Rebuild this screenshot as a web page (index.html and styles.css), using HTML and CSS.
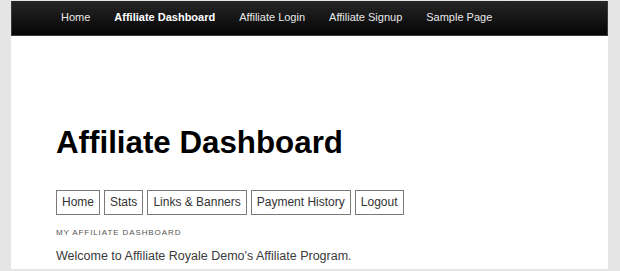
FILE: index.html
```html
<!DOCTYPE html>
<html lang="en">
<head>
  <meta charset="UTF-8">
  <meta name="viewport" content="width=device-width, initial-scale=1.0">
  <title>Affiliate Dashboard</title>
  <link rel="stylesheet" href="styles.css">
</head>
<body>

  <div class="page">
    <div class="navbar">
      <a href="#">Home</a>
      <a href="#" class="current">Affiliate Dashboard</a>
      <a href="#">Affiliate Login</a>
      <a href="#">Affiliate Signup</a>
      <a href="#">Sample Page</a>
    </div>

    <div class="content">
      <h1>Affiliate Dashboard</h1>

      <div class="tabs">
        <a href="#">Home</a>
        <a href="#">Stats</a>
        <a href="#">Links &amp; Banners</a>
        <a href="#">Payment History</a>
        <a href="#">Logout</a>
      </div>

      <p class="label">My Affiliate Dashboard</p>
      <p class="welcome">Welcome to Affiliate Royale Demo's Affiliate Program.</p>
    </div>
  </div>

</body>
</html>
```

FILE: styles.css
```css
body {
  font-family: 'Liberation Sans', Arial, sans-serif;
  background: #e5e5e5;
  margin: 0;
  padding: 1px 12px 0 11px;
}
.page {
  background-color: #ffffff;
  height: 268px;
  overflow: hidden;
}
.navbar {
  height: 35px;
  background: linear-gradient(#262626, #050505);
  border: 1px solid #3a3a3a;
  border-top: none;
  box-sizing: border-box;
  display: flex;
  align-items: center;
  gap: 24px;
  padding-left: 49px;
  padding-bottom: 2px;
}
.navbar a {
  color: #e8e8e8;
  font-size: 11px;
  text-decoration: none;
}
.navbar a.current {
  color: #ffffff;
  font-weight: bold;
}
.content {
  padding-left: 45px;
}
h1 {
  font-size: 31.3px;
  line-height: 31px;
  color: #000;
  font-weight: bold;
  margin: 91px 0 0 0;
}
.tabs {
  display: flex;
  gap: 4px;
  margin-top: 32px;
}
.tabs a {
  display: block;
  border: 1px solid #7a7a7a;
  padding: 4px 5px;
  font-size: 12px;
  line-height: 15px;
  color: #333;
  text-decoration: none;
}
.label {
  font-size: 8px;
  line-height: 10px;
  letter-spacing: 0.9px;
  text-transform: uppercase;
  color: #555;
  margin: 13px 0 0 0;
}
.welcome {
  font-size: 12.5px;
  line-height: 16px;
  color: #3a3a3a;
  margin: 10px 0 0 0;
}
```
